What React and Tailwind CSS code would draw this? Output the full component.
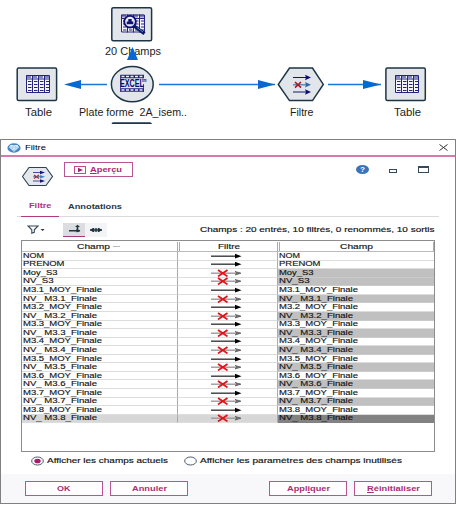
import React, { useLayoutEffect, useRef, useState } from "react";

// Text stretched horizontally so that it fills `width` pixels.
function Fit({ width, className = "", children }) {
  const ref = useRef(null);
  const [scale, setScale] = useState(1);
  useLayoutEffect(() => {
    const natural = ref.current.getBoundingClientRect().width / scale;
    if (natural) setScale(width / natural);
  }, [width, children]);
  return (
    <span className={"block shrink-0 whitespace-pre " + className} style={{ width }}>
      <span ref={ref} className="inline-block origin-left whitespace-pre" style={{ transform: `scaleX(${scale})` }}>
        {children}
      </span>
    </span>
  );
}

function TableGlyph({ x, y }) {
  return (
    <g transform={`translate(${x} ${y})`}>
      <rect x="0" y="0" width="24" height="18" fill="#f4f5fb" />
      <path d="M0 1.5H24" stroke="#2a2a86" strokeWidth="3" strokeDasharray="5 1" opacity=".55" />
      <path d="M.5 .5H23.5V17.5H.5ZM6.5 0V18M12.5 0V18M18.5 0V18M0 4H24" fill="none" stroke="#24247f" strokeWidth="1" />
      <path d="M2 6.5H23M2 9.5H23M2 12.5H23M2 15.5H23" stroke="#24247f" strokeWidth="1" strokeDasharray="3.5 2.5" />
    </g>
  );
}

function FilterGlyph({ x, y }) {
  return (
    <g transform={`translate(${x} ${y})`}>
      <path d="M0 2.5H13M0 17H13" stroke="#15156f" strokeWidth="1.2" />
      <path d="M12 -.2L18 2.5L12 5.2L13 2.5ZM12 14.3L18 17L12 19.7L13 17Z" fill="#0b0b70" />
      <path d="M0 9.8H13" stroke="#3c78b5" strokeWidth="1.2" />
      <path d="M12 7L18 9.8L12 12.6L13 9.8Z" fill="#2f68a8" />
      <path d="M2 7L8 12.7M8 7L2 12.7" stroke="#a31822" strokeWidth="1.6" />
    </g>
  );
}

function Canvas() {
  return (
    <div className="relative h-[139px] w-full shrink-0 overflow-hidden bg-white text-[10px] leading-[12px] text-[#1c1c1c]">
      <Fit width={56} className="absolute left-[105px] top-[46px]">20 Champs</Fit>
      <svg className="absolute left-0 top-0" width="456" height="139" viewBox="0 0 456 139">
        <g stroke="#1a75d8" strokeWidth="1.3">
          <path d="M107 84.5H78M159 84.5H275M328 84.5H381" />
        </g>
        <path d="M64 84.5L81 80V89ZM275 84.5L258 80V89ZM381 84.5L363 80V89ZM132.5 47L138 60H127Z" fill="#0668d3" />
        <g fill="#e2e6ea" stroke="#1c3547" strokeWidth="1.5">
          <rect x="111.8" y="7.7" width="39.8" height="33" rx="1.5" />
          <rect x="17.2" y="68" width="39.4" height="32.6" rx="1.5" />
          <rect x="385.9" y="68" width="39.4" height="32.6" rx="1.5" />
          <ellipse cx="132.3" cy="84.2" rx="20.9" ry="17.6" />
          <path d="M278.3 84.4L289.5 68H312.5L323.3 84.4L312.5 100.6H289.5Z" />
        </g>
        <path d="M113 122.3H150Q151.5 122.3 152 124H111.5Q112 122.3 113 122.3Z" fill="#1c3547" />
        <TableGlyph x="26" y="75" />
        <TableGlyph x="395" y="75" />
        <TableGlyph x="121" y="14.5" />
        <circle cx="130" cy="21.7" r="5.8" fill="#e8ecfb" stroke="#11116f" strokeWidth="1.9" />
        <path d="M126.7 24.2V21.5H128.3V19H131.7V21.5H133.3V24.2Z" fill="#11116f" />
        <path d="M134 26L144.5 33.7" stroke="#0b1764" strokeWidth="3.4" />
        <path d="M137 27.5L143 32" stroke="#4d8ad0" strokeWidth="1" />
        <path d="M120.5 76.5H144M120.5 90H144" stroke="#24247f" strokeWidth="3.6" />
        <path d="M121.5 76.5H144M121.5 90H143" stroke="#e8eaf5" strokeWidth="1.6" strokeDasharray="3 1.5" />
        <path d="M120.5 75V92M143.5 84V92" stroke="#24247f" strokeWidth=".8" />
        <FilterGlyph x="293" y="75" />
      </svg>
      <Fit width={24} className="absolute left-[119.5px] top-[77.5px] text-[10px] font-bold text-[#080870]">EXCEL</Fit>
      <Fit width={4.5} className="absolute left-[142px] top-[74px] text-[5px] font-bold text-[#080870]">tm</Fit>
      <Fit width={27} className="absolute left-[25px] top-[107px]">Table</Fit>
      <Fit width={108} className="absolute left-[78.5px] top-[107px]">{"Plate forme  2A_isem.."}</Fit>
      <Fit width={23.5} className="absolute left-[289.5px] top-[107px]">Filtre</Fit>
      <Fit width={27} className="absolute left-[393.5px] top-[107px]">Table</Fit>
    </div>
  );
}

function TitleBar() {
  return (
    <div className="flex h-[17px] shrink-0 items-center border-b-2 border-[#d57aab] pl-[6px] pr-[7px]">
      <svg width="14" height="10" viewBox="0 0 14 10">
        <ellipse cx="7" cy="5" rx="6.6" ry="4.7" fill="#4387c4" />
        <path d="M3.6 2H10.4L12.2 4.2L7 8.8L1.8 4.2Z" fill="#dceefa" />
        <path d="M2.5 4.2H11.5L7 8.4ZM5 4.2L7 2L9 4.2L7 8.4Z" fill="none" stroke="#8ec1e6" strokeWidth=".6" />
      </svg>
      <Fit width={21} className="ml-[4px] text-[8px] leading-[10px] text-black">Filtre</Fit>
      <svg className="ml-auto" width="9" height="7" viewBox="0 0 9 7">
        <path d="M.5 .5L8.5 6.5M8.5 .5L.5 6.5" stroke="#333" strokeWidth="1" />
      </svg>
    </div>
  );
}

function Header() {
  return (
    <div className="flex h-[33px] shrink-0 items-start pl-[20px] pr-[26px]">
      <svg className="mt-[9px]" width="33" height="21" viewBox="0 0 33 21">
        <path d="M1.5 10.5L8 1.5H25L31.5 10.5L25 19.5H8Z" fill="#e4e8ec" stroke="#2c4353" strokeWidth="1.1" />
        <path d="M12 6.5H20M12 15H20" stroke="#4a4a98" strokeWidth="1" />
        <path d="M12 10.7H20" stroke="#4a82bb" />
        <path d="M19 4.7L24 6.5L19 8.3ZM19 13.2L24 15L19 16.8Z" fill="#15157a" />
        <path d="M19 8.9L24 10.7L19 12.5Z" fill="#4080bb" />
        <path d="M13 9L18 12.5M18 9L13 12.5" stroke="#a02a3c" strokeWidth="1.2" />
      </svg>
      <div className="ml-[10px] mt-[5px] flex h-[15px] w-[69px] items-center border border-[#b95591] pl-[9px]">
        <svg width="12" height="8" viewBox="0 0 12 8">
          <rect x=".5" y=".5" width="11" height="7" fill="none" stroke="#bb4b8b" />
          <path d="M4 1.7L9 4L4 6.3Z" fill="#a3246b" />
        </svg>
        <Fit width={32} className="ml-[4px] text-[8px] font-bold leading-[10px] text-[#a9286f]"><u>A</u>perçu</Fit>
      </div>
      <div className="ml-auto mt-[7px] flex h-[11px] items-center">
        <div className="flex h-[9px] w-[13px] items-center justify-center rounded-[50%] bg-[#3973bb] text-white">
          <Fit width={5} className="text-[7.5px] font-bold leading-[9px]">?</Fit>
        </div>
        <div className="ml-[20px] mt-[3px] h-[4px] w-[8px] border border-[#34495a]" />
        <div className="ml-[21px] h-[7px] w-[11px] border border-t-2 border-[#34495a]" />
      </div>
    </div>
  );
}

function Tabs() {
  return (
    <div className="mx-[16px] flex h-[27px] shrink-0 items-end border-b border-[#d8dadd] text-[7.5px] font-bold leading-[10px]">
      <div className="-mb-px ml-[4px] h-[16px] w-[38px] border-b border-[#b23a7f] pl-[8px]">
        <Fit width={22.5} className="text-[#b0307a]">Filtre</Fit>
      </div>
      <Fit width={54} className="mb-[4px] ml-[9px] text-[#26384a]">Annotations</Fit>
    </div>
  );
}

function Tools() {
  return (
    <div className="flex h-[23px] shrink-0 items-center pl-[26px] pr-[21px] pt-[2px]">
      <svg width="18" height="9" viewBox="0 0 18 9">
        <path d="M1 1H11L7.3 4.8V7.3L4.8 8.2V4.8Z" fill="none" stroke="#34495a" strokeWidth="1.1" />
        <path d="M13.5 4H17.7L15.6 6Z" fill="#26384a" />
      </svg>
      <div className="ml-[18px] flex h-[14px] w-[22px] items-center justify-center border-b border-[#a23b78] bg-[#dcdde0]">
        <svg width="13" height="10" viewBox="0 0 13 10">
          <path d="M1 6.8H12M9.5 2V8" stroke="#20343f" strokeWidth="1.6" />
          <path d="M7 3H12L9.5 .8ZM12.5 6.8L8.5 5V8.6Z" fill="#20343f" />
        </svg>
      </div>
      <div className="flex h-[14px] w-[22px] items-center justify-center bg-[#f3f4f5]">
        <svg width="12" height="6" viewBox="0 0 12 6">
          <path d="M0 3H12M3.5 1V5M6 1V5M8.5 1V5" stroke="#20343f" strokeWidth="1.4" />
          <path d="M12 3L8.5 .8V5.2ZM0 3L3 1V5Z" fill="#20343f" />
        </svg>
      </div>
      <Fit width={234.5} className="ml-auto text-[7.5px] leading-[10px] text-[#111] [-webkit-text-stroke:0.15px_#111]">Champs : 20 entrés, 10 filtrés, 0 renommés, 10 sortis</Fit>
    </div>
  );
}

const rows = [
  ["NOM", 21, false],
  ["PRENOM", 41.5, false],
  ["Moy_S3", 34.5, true],
  ["NV_S3", 30.5, true],
  ...[1, 2, 3, 4, 5, 6, 7, 8].flatMap((n) => [
    [`M3.${n}_MOY_Finale`, 79, false],
    [`NV_ M3.${n}_Finale`, 74, true],
  ]),
];

function RowArrow({ filtered }) {
  return (
    <svg width="31" height="8" viewBox="0 0 31 8">
      {filtered ? (
        <>
          <path d="M0 4.2H29" stroke="#9a9a9a" strokeWidth="1.4" />
          <path d="M24 2.4L30 4.2L24 6L26 4.2Z" fill="#777" stroke="#555" strokeWidth=".7" />
          <path d="M7 1L16.5 7.4M16.5 1L7 7.4" stroke="#e3131a" strokeWidth="1.8" />
        </>
      ) : (
        <>
          <path d="M0 4.2H26" stroke="#3a3a3a" strokeWidth="1.4" />
          <path d="M24 1.8L30.5 4.2L24 6.6Z" fill="#000" />
        </>
      )}
    </svg>
  );
}

function FieldTable() {
  return (
    <div className="mx-[20px] flex h-[212px] w-[414px] shrink-0 flex-col border border-[#8c8c8c] text-[7.5px] leading-[8px] text-[#141414] [-webkit-text-stroke:0.15px_#141414]">
      <div className="flex h-[11px] shrink-0 items-center border-b border-[#bbb] pt-px">
        <div className="flex h-full w-[156px] items-center border-r border-[#aaa] pl-[55px]">
          <Fit width={33}>Champ</Fit>
          <div className="ml-[3px] h-px w-[7px] bg-[#bbb]" />
        </div>
        <div className="ml-px flex h-full w-[99px] items-center justify-center border-l border-r border-[#aaa]">
          <Fit width={22}>Filtre</Fit>
        </div>
        <div className="ml-px flex h-full flex-1 items-center justify-center border-l border-r border-[#aaa]">
          <Fit width={33}>Champ</Fit>
        </div>
      </div>
      {rows.map(([name, width, filtered], i) => {
        const last = i === rows.length - 1;
        return (
          <div key={name} className={"flex h-[8.57px] shrink-0 " + (last ? "bg-[#d7d7d7]" : "bg-white")}>
            <div className="flex w-[156px] items-center border-b border-r border-b-[#ddd] border-r-[#aaa] pl-px">
              <Fit width={width}>{name}</Fit>
            </div>
            <div className="flex w-[100px] items-center border-b border-r border-b-[#ddd] border-r-[#aaa] pl-[33px]">
              <RowArrow filtered={filtered} />
            </div>
            <div className={"flex flex-1 items-center border-b pl-px " + (last ? "border-[#828282] bg-[#828282]" : filtered ? "border-[#cacaca] bg-[#c0c0c0]" : "border-[#ddd]")}>
              <Fit width={width}>{name}</Fit>
            </div>
          </div>
        );
      })}
    </div>
  );
}

function Radio({ checked }) {
  return (
    <svg width="13" height="10" viewBox="0 0 13 10">
      <ellipse cx="6.5" cy="5" rx="5.8" ry="4" fill="#fff" stroke="#4b5a68" strokeWidth="1" />
      {checked && <ellipse cx="6.5" cy="5" rx="3.2" ry="2.3" fill="#a51d6d" />}
    </svg>
  );
}

function Button({ width, className = "", children }) {
  return (
    <div className={"flex h-[15px] w-[78px] items-center justify-center border border-[#bb5592] bg-white " + className}>
      <Fit width={width} className="text-[7.5px] font-bold leading-[10px] text-[#ab2c74]">{children}</Fit>
    </div>
  );
}

export default function App() {
  return (
    <div className="flex h-[505px] w-[456px] flex-col overflow-hidden bg-white [font-family:'Liberation_Sans',Arial,sans-serif]">
      <Canvas />
      <div className="flex h-[365px] w-[456px] shrink-0 flex-col border border-[#808080] bg-white">
        <TitleBar />
        <Header />
        <Tabs />
        <Tools />
        <FieldTable />
        <div className="mb-[4px] flex h-[18px] shrink-0 items-center pl-[30px] text-[7.5px] leading-[10px] text-[#111] [-webkit-text-stroke:0.15px_#111]">
          <Radio checked />
          <Fit width={121} className="ml-[3px]">Afficher les champs actuels</Fit>
          <div className="ml-[16px] flex"><Radio /></div>
          <Fit width={202} className="ml-[3px]">Afficher les paramètres des champs inutilisés</Fit>
        </div>
        <div className="flex flex-1 items-start bg-[#f8f8fb] pl-[24px] pr-[23px] pt-[7px]">
          <Button width={13.5}>OK</Button>
          <Button width={35} className="ml-[7px]">Annuler</Button>
          <Button width={43} className="ml-auto">Appl<u>i</u>quer</Button>
          <Button width={53} className="ml-[7px]"><u>R</u>éinitialiser</Button>
        </div>
      </div>
    </div>
  );
}
